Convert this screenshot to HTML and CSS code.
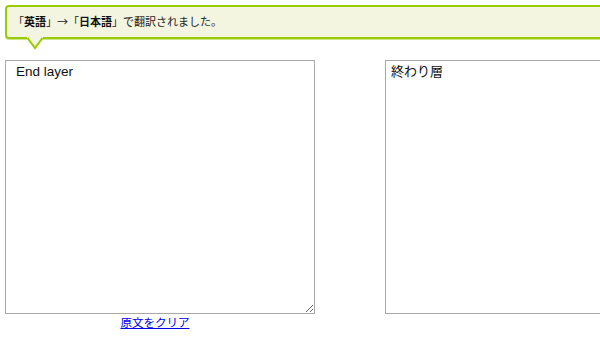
FILE: index.html
```html
<!DOCTYPE html>
<html lang="ja">
<head>
<meta charset="utf-8">
<title>翻訳</title>
<link rel="stylesheet" href="styles.css">
</head>
<body>
<div class="page">
  <div class="bubble">
    <p class="msg">「<b>英語</b>」→「<b>日本語</b>」で翻訳されました。</p>
    <svg class="tail" width="16" height="13" viewBox="0 0 16 13" aria-hidden="true">
      <polygon points="0,0 16,0 16,2 8,11 0,2" fill="#f3f5e0"/>
      <polyline points="0.5,1 8,11 15.5,1" fill="none" stroke="#99cc00" stroke-width="2"/>
    </svg>
  </div>
  <div class="panes">
    <div class="pane">
      <textarea class="box box-src">End layer</textarea>
      <div class="links"><a href="#" class="clear">原文をクリア</a></div>
    </div>
    <div class="pane">
      <textarea class="box box-dst">終わり層</textarea>
    </div>
  </div>
</div>
</body>
</html>
```

FILE: styles.css
```css
html, body {
  margin: 0;
  padding: 0;
  background: #fff;
  overflow: hidden;
}
body {
  font-family: "Liberation Sans", "Noto Sans CJK JP", sans-serif;
  color: #222;
}
.page {
  padding: 5px 0 0 5px;
  width: 595px;
  height: 332px;
  overflow: hidden;
}
.bubble {
  position: relative;
  width: 640px;
  height: 30px;
  box-sizing: content-box;
  border: 2px solid #99cc00;
  border-radius: 4px;
  background: #f3f5e0;
  box-shadow: 0 1px 0 #cfe38a;
}
.msg {
  margin: 0;
  padding: 0 0 0 6px;
  font-family: "Noto Sans CJK JP", sans-serif;
  font-size: 11px;
  line-height: 28px;
  color: #222;
}
.msg b {
  color: #111;
  font-weight: bold;
}
.tail {
  position: absolute;
  left: 20px;
  top: 30px;
  display: block;
}
.panes {
  display: flex;
  gap: 70px;
  margin-top: 21px;
}
.pane {
  display: flex;
  flex-direction: column;
  width: 310px;
  flex: none;
}
.box {
  box-sizing: border-box;
  width: 310px;
  height: 254px;
  margin: 0;
  border: 1px solid #a9a9a9;
  background: #fff;
  color: #111;
  line-height: 16px;
  font-family: "Liberation Sans", "Noto Sans CJK JP", sans-serif;
  display: block;
  outline: none;
}
.box-src {
  padding: 3px 10px;
  font-size: 13.5px;
}
.box-dst {
  padding: 3px 5px;
  font-size: 13px;
  resize: none;
}
.links {
  width: 300px;
  text-align: center;
  line-height: 16px;
}
.clear {
  font-family: "Noto Sans CJK JP", sans-serif;
  font-size: 11.5px;
  color: #0000ee;
  text-decoration: underline;
}
```
